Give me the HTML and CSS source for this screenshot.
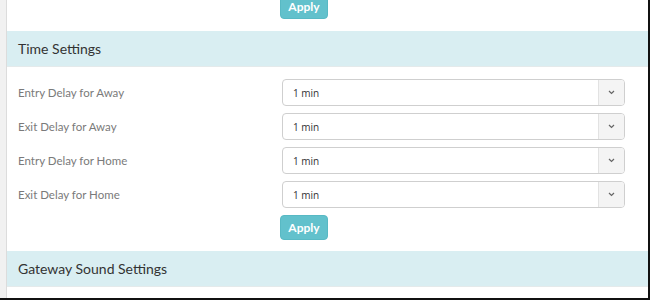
FILE: index.html
```html
<!DOCTYPE html>
<html>
<head>
<meta charset="utf-8">
<link rel="stylesheet" href="styles.css">
</head>
<body>
<div class="frame">
  <div class="side"></div>
  <div class="main">
    <div class="actions top"><button class="apply">Apply</button></div>
    <div class="panel-head">Time Settings</div>
    <div class="panel-body">
      <div class="row">
        <label class="label">Entry Delay for Away</label>
        <div class="select"><span class="value">1 min</span><span class="caret"><svg width="7" height="5" viewBox="0 0 7 5"><path d="M1 1l2.5 2.5L6 1" fill="none" stroke="#666" stroke-width="1.2"/></svg></span></div>
      </div>
      <div class="row">
        <label class="label">Exit Delay for Away</label>
        <div class="select"><span class="value">1 min</span><span class="caret"><svg width="7" height="5" viewBox="0 0 7 5"><path d="M1 1l2.5 2.5L6 1" fill="none" stroke="#666" stroke-width="1.2"/></svg></span></div>
      </div>
      <div class="row">
        <label class="label">Entry Delay for Home</label>
        <div class="select"><span class="value">1 min</span><span class="caret"><svg width="7" height="5" viewBox="0 0 7 5"><path d="M1 1l2.5 2.5L6 1" fill="none" stroke="#666" stroke-width="1.2"/></svg></span></div>
      </div>
      <div class="row">
        <label class="label">Exit Delay for Home</label>
        <div class="select"><span class="value">1 min</span><span class="caret"><svg width="7" height="5" viewBox="0 0 7 5"><path d="M1 1l2.5 2.5L6 1" fill="none" stroke="#666" stroke-width="1.2"/></svg></span></div>
      </div>
      <div class="actions"><button class="apply">Apply</button></div>
    </div>
    <div class="panel-head second">Gateway Sound Settings</div>
  </div>
</div>
</body>
</html>
```

FILE: styles.css
```css
html, body {
  margin: 0;
  padding: 0;
  background: #fff;
}
body {
  font-family: Lato, "Noto Sans", sans-serif;
}
.frame {
  width: 650px;
  height: 300px;
  box-sizing: border-box;
  display: flex;
  border-right: 2px solid #111;
  border-bottom: 2px solid #111;
  overflow: hidden;
}
.side {
  width: 6px;
  flex: none;
  background: #f1f1f1;
  border-right: 1px solid #dcdcdc;
}
.main {
  flex: 1;
  display: flex;
  flex-direction: column;
  min-width: 0;
}
.actions {
  padding-left: 273px;
  display: flex;
}
.actions.top {
  margin-top: -6px;
  height: 25px;
  margin-bottom: 12px;
}
.apply {
  width: 48px;
  height: 25px;
  border: 1px solid #58b9c4;
  border-radius: 4px;
  background: #62c1cc;
  color: #fff;
  font-family: Lato, "Noto Sans", sans-serif;
  font-weight: 700;
  font-size: 12px;
  padding: 0;
  cursor: pointer;
}
.panel-head {
  height: 36px;
  box-sizing: border-box;
  background: #d9eef2;
  border-bottom: 1px solid #e4eaeb;
  padding-left: 11px;
  display: flex;
  align-items: center;
  font-size: 14px;
  color: #333;
}
.panel-body {
  padding: 12px 23px 0 11px;
  display: flex;
  flex-direction: column;
  gap: 7px;
}
.panel-body .actions {
  padding-left: 262px;
}
.row {
  display: flex;
  align-items: center;
}
.label {
  width: 264px;
  flex: none;
  font-size: 11.5px;
  color: #7a7a7a;
}
.select {
  flex: 1;
  height: 27px;
  box-sizing: border-box;
  border: 1px solid #cfcfcf;
  border-radius: 4px;
  display: flex;
  align-items: stretch;
  overflow: hidden;
  background: #fff;
}
.value {
  flex: 1;
  display: flex;
  align-items: center;
  padding-left: 10px;
  font-family: "Open Sans", "DejaVu Sans", sans-serif;
  font-size: 10px;
  color: #333;
}
.caret {
  width: 25px;
  flex: none;
  background: #f4f4f4;
  border-left: 1px solid #e2e2e2;
  display: flex;
  align-items: center;
  justify-content: center;
}
.panel-head.second {
  margin-top: 11px;
}
```
